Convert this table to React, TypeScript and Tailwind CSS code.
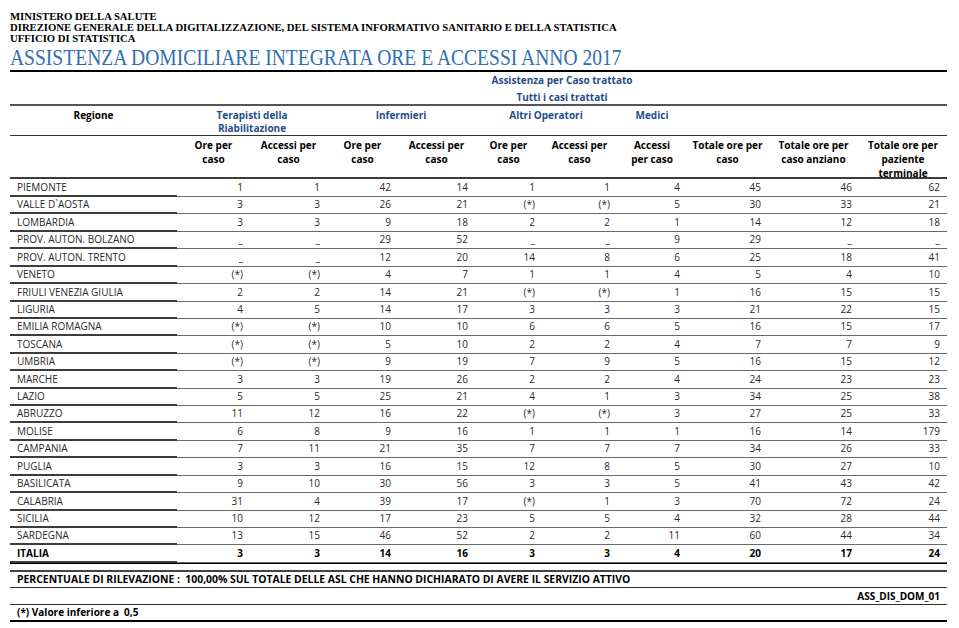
const cols = "grid grid-cols-[167px_73px_77px_71px_77px_67px_75px_70px_81px_91px_88px]";

const rows: string[][] = [
  ["PIEMONTE", "1", "1", "42", "14", "1", "1", "4", "45", "46", "62"],
  ["VALLE D`AOSTA", "3", "3", "26", "21", "(*)", "(*)", "5", "30", "33", "21"],
  ["LOMBARDIA", "3", "3", "9", "18", "2", "2", "1", "14", "12", "18"],
  ["PROV. AUTON. BOLZANO", "_", "_", "29", "52", "_", "_", "9", "29", "_", "_"],
  ["PROV. AUTON. TRENTO", "_", "_", "12", "20", "14", "8", "6", "25", "18", "41"],
  ["VENETO", "(*)", "(*)", "4", "7", "1", "1", "4", "5", "4", "10"],
  ["FRIULI VENEZIA GIULIA", "2", "2", "14", "21", "(*)", "(*)", "1", "16", "15", "15"],
  ["LIGURIA", "4", "5", "14", "17", "3", "3", "3", "21", "22", "15"],
  ["EMILIA ROMAGNA", "(*)", "(*)", "10", "10", "6", "6", "5", "16", "15", "17"],
  ["TOSCANA", "(*)", "(*)", "5", "10", "2", "2", "4", "7", "7", "9"],
  ["UMBRIA", "(*)", "(*)", "9", "19", "7", "9", "5", "16", "15", "12"],
  ["MARCHE", "3", "3", "19", "26", "2", "2", "4", "24", "23", "23"],
  ["LAZIO", "5", "5", "25", "21", "4", "1", "3", "34", "25", "38"],
  ["ABRUZZO", "11", "12", "16", "22", "(*)", "(*)", "3", "27", "25", "33"],
  ["MOLISE", "6", "8", "9", "16", "1", "1", "1", "16", "14", "179"],
  ["CAMPANIA", "7", "11", "21", "35", "7", "7", "7", "34", "26", "33"],
  ["PUGLIA", "3", "3", "16", "15", "12", "8", "5", "30", "27", "10"],
  ["BASILICATA", "9", "10", "30", "56", "3", "3", "5", "41", "43", "42"],
  ["CALABRIA", "31", "4", "39", "17", "(*)", "1", "3", "70", "72", "24"],
  ["SICILIA", "10", "12", "17", "23", "5", "5", "4", "32", "28", "44"],
  ["SARDEGNA", "13", "15", "46", "52", "2", "2", "11", "60", "44", "34"],
];

const totals = ["ITALIA", "3", "3", "14", "16", "3", "3", "4", "20", "17", "24"];

// sub headings with their own side padding, so they wrap like the printed report
const subHeads: [string, string][] = [
  ["Ore per caso", "px-[8px]"],
  ["Accessi per caso", "px-[5px]"],
  ["Ore per caso", "px-[8px]"],
  ["Accessi per caso", "px-[5px]"],
  ["Ore per caso", "px-[8px]"],
  ["Accessi per caso", "px-[3px]"],
  ["Accessi per caso", "px-[10px]"],
  ["Totale ore per caso", "px-[2px]"],
  ["Totale ore per caso anziano", "px-[6px]"],
  ["Totale ore per paziente terminale", "px-[2px]"],
];

function DataRow({ cells, bold }: { cells: string[]; bold?: boolean }) {
  return (
    <div className={`${cols} h-[17.43px] ${bold ? "font-bold text-black" : "text-[#2a2a2a]"}`}>
      <div className="pl-[7px] leading-[16px] border-b-2 border-[#3c3c3c]">{cells[0]}</div>
      {cells.slice(1).map((c, i) => (
        <div key={i} className="pr-[7px] text-right leading-[16px] border-b border-[#6a6a6a]">
          {c}
        </div>
      ))}
    </div>
  );
}

export default function App() {
  return (
    <div className="w-[959px] h-[628px] bg-white overflow-hidden font-['Open_Sans',sans-serif] text-[10px]">
      <div className="pl-[10px] pt-[11px] font-['Liberation_Serif',serif] font-bold text-[10.7px] leading-[11px] text-black whitespace-nowrap">
        <div>MINISTERO DELLA SALUTE</div>
        <div>DIREZIONE GENERALE DELLA DIGITALIZZAZIONE, DEL SISTEMA INFORMATIVO SANITARIO E DELLA STATISTICA</div>
        <div>UFFICIO DI STATISTICA</div>
      </div>
      <div className="pl-[10px] pt-[2px] h-[26px] font-['Liberation_Serif',serif] text-[23px] leading-[24px] text-[#2f6fb0] whitespace-nowrap">
        <span className="inline-block origin-left scale-x-[0.85]">ASSISTENZA DOMICILIARE INTEGRATA ORE E ACCESSI ANNO 2017</span>
      </div>

      <div className="ml-[10px] w-[937px]">
        {/* group title */}
        <div className="border-t-2 border-black border-b-2 border-b-[#555] h-[36px] pl-[167px] text-center font-bold text-[#1f4e8c] leading-[17px]">
          <div>Assistenza per Caso trattato</div>
          <div>Tutti i casi trattati</div>
        </div>

        {/* category row */}
        <div className={`${cols} h-[30px] border-b border-[#333] font-bold text-center leading-[13px] pt-[3px]`}>
          <div className="text-black">Regione</div>
          <div className="col-span-2 text-[#1f4e8c] px-[30px]">Terapisti della Riabilitazione</div>
          <div className="col-span-2 text-[#1f4e8c]">Infermieri</div>
          <div className="col-span-2 text-[#1f4e8c]">Altri Operatori</div>
          <div className="text-[#1f4e8c]">Medici</div>
        </div>

        {/* sub headings */}
        <div className={`${cols} h-[43px] border-b-2 border-[#3c3c3c] font-bold text-center text-black leading-[14px] pt-[2px]`}>
          <div />
          {subHeads.map(([h, pad], i) => (
            <div key={i} className={pad}>
              {h}
            </div>
          ))}
        </div>

        {rows.map((r) => (
          <DataRow key={r[0]} cells={r} />
        ))}
        <div className="border-b-2 border-black">
          <DataRow cells={totals} bold />
        </div>

        <div className="mt-[6px] border-t-2 border-[#444] border-b border-b-[#333] h-[18px] pl-[7px] font-bold text-black text-[10.4px] leading-[15px]">
          PERCENTUALE DI RILEVAZIONE :&nbsp; 100,00% SUL TOTALE DELLE ASL CHE HANNO DICHIARATO DI AVERE IL SERVIZIO ATTIVO
        </div>
        <div className="border-b border-[#333] h-[17px] pr-[7px] text-right font-bold text-black leading-[16px]">
          ASS_DIS_DOM_01
        </div>
        <div className="border-b-2 border-black h-[17px] pl-[7px] font-bold text-black leading-[15px]">
          (*) Valore inferiore a&nbsp; 0,5
        </div>
      </div>
    </div>
  );
}
